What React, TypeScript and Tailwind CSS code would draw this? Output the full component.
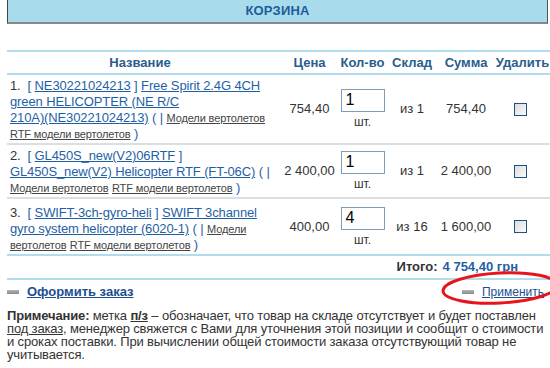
import React from "react";

const LINK = "text-[#1f5fa6] underline";
const CAT = "text-[#444] underline text-[11px]";

function Qty({ v }: { v: string }) {
  return (
    <div className="flex flex-col items-center">
      <div className="w-[44px] h-[23px] border border-[#7f9db9] bg-white text-[16px] leading-[20px] pl-[4px] text-black text-left">
        {v}
      </div>
      <div className="text-[12px] leading-[14px] mt-[3px] text-[#333]">шт.</div>
    </div>
  );
}

function Check() {
  return (
    <span className="inline-block w-[13px] h-[13px] border border-[#1c5180] bg-gradient-to-br from-[#dcdcdc] to-[#fbfbfb]" />
  );
}

type Row = {
  n: string;
  code: string;
  title: React.ReactNode;
  price: string;
  qty: string;
  stock: string;
  sum: string;
  pad: string;
};

const rows: Row[] = [
  {
    n: "1.",
    code: "NE30221024213",
    title: (
      <>
        Free Spirit 2.4G 4CH green HELICOPTER (NE R/C{" "}
        <span className="whitespace-nowrap">210A)(NE30221024213)</span>
      </>
    ),
    price: "754,40",
    qty: "1",
    stock: "из 1",
    sum: "754,40",
    pad: "pt-[3px] pb-[1px]",
  },
  {
    n: "2.",
    code: "GL450S_new(V2)06RTF",
    title: "GL450S_new(V2) Helicopter RTF (FT-06C)",
    price: "2 400,00",
    qty: "1",
    stock: "из 1",
    sum: "2 400,00",
    pad: "pt-[3px] pb-[1px]",
  },
  {
    n: "3.",
    code: "SWIFT-3ch-gyro-heli",
    title: "SWIFT 3channel gyro system helicopter (6020-1)",
    price: "400,00",
    qty: "4",
    stock: "из 16",
    sum: "1 600,00",
    pad: "pt-[6px] pb-[1px]",
  },
];

function Bullet() {
  return <span className="inline-block w-[12px] h-[4px] bg-gradient-to-b from-[#b5b5b5] to-[#8a8a8a]" />;
}

export default function App() {
  return (
    <div className="relative w-[550px] h-[368px] overflow-hidden bg-white font-['Liberation_Sans',Arial,sans-serif] text-[#333]">
      <div className="ml-[7px] w-[541px] h-[24px] bg-[#a8dbeb] border-l border-r border-b-2 border-l-[#444] border-r-[#555] border-b-[#888] flex items-center justify-center">
        <span className="text-[13px] font-bold text-[#1d5d9b] tracking-[0.2px]">КОРЗИНА</span>
      </div>

      <table className="ml-[7px] mt-[26px] w-[543px] border-collapse text-[13px]">
        <colgroup>
          <col className="w-[270px]" />
          <col className="w-[61px]" />
          <col className="w-[49px]" />
          <col className="w-[50px]" />
          <col className="w-[58px]" />
          <col className="w-[55px]" />
        </colgroup>
        <thead>
          <tr className="border-t-2 border-b-2 border-[#b0dcec] h-[23px] text-[#2a5d8c] font-bold">
            <th className="font-bold text-center pr-[4px]">Название</th>
            <th className="font-bold text-center pl-[4px]">Цена</th>
            <th className="font-bold text-center">Кол-во</th>
            <th className="font-bold text-center">Склад</th>
            <th className="font-bold text-center">Сумма</th>
            <th className="font-bold text-center">Удалить</th>
          </tr>
        </thead>
        <tbody>
          {rows.map((r, i) => (
            <tr
              key={r.n}
              className={i === rows.length - 1 ? "border-b-2 border-[#b0dcec]" : "border-b-2 border-[#d9dfe2]"}
            >
              <td className={`align-top pl-[3px] pr-0 leading-[16px] tracking-[-0.12px] ${r.pad}`}>
                <span className="text-[#333]">{r.n}</span>
                <span className="text-[#1f5fa6]">
                  {"\u00a0 [ "}
                  <span className={LINK}>{r.code}</span>
                  {" ] "}
                  <span className={LINK}>{r.title}</span>
                  {" (\u00a0| "}
                </span>
                <span className={CAT}>Модели вертолетов</span>{" "}
                <span className={CAT}>RTF модели вертолетов</span>
                <span className="text-[#1f5fa6]">{" )"}</span>
              </td>
              <td className="text-center align-middle pl-[4px]">{r.price}</td>
              <td className="align-middle">
                <Qty v={r.qty} />
              </td>
              <td className="text-center align-middle">{r.stock}</td>
              <td className="text-center align-middle">{r.sum}</td>
              <td className="text-center align-middle">
                <div className="flex justify-center pr-[4px]">
                  <Check />
                </div>
              </td>
            </tr>
          ))}
        </tbody>
      </table>

      <div className="ml-[7px] w-[543px] h-[24px] border-b-2 border-[#b0dcec] flex items-center justify-end pr-[32px] text-[13px] font-bold">
        <span className="text-[#333]">Итого:</span>
        <span className="ml-[5px] text-[#1f5fa6]">4 754,40 грн</span>
      </div>

      <div className="ml-[7px] w-[543px] h-[24px] flex items-center justify-between text-[13px]">
        <div className="flex items-center">
          <Bullet />
          <span className="ml-[8px] font-bold underline text-[#1d4e8f]">Оформить заказ</span>
        </div>
        <div className="flex items-center pr-[6px]">
          <Bullet />
          <span className="ml-[8px] text-[12px] underline text-[#1d4e8f]">Применить</span>
        </div>
      </div>

      <p className="ml-[7px] mt-[5px] w-[543px] text-[13px] leading-[13px] tracking-[-0.15px] text-[#333]">
        <b>Примечание:</b> метка <b className="underline">п/з</b> – обозначает, что товар на складе отсутствует и будет поставлен{" "}
        <span className="underline">под заказ</span>, менеджер свяжется с Вами для уточнения этой позиции и сообщит о стоимости и сроках поставки. При вычислении общей стоимости заказа отсутствующий товар не учитывается.
      </p>

      <svg className="absolute left-[438px] top-[267px]" width="120" height="44" viewBox="0 0 120 44">
        <ellipse cx="62" cy="21" rx="57" ry="15" fill="none" stroke="#e8141b" strokeWidth="3" transform="rotate(-3 62 21)" />
      </svg>
    </div>
  );
}
